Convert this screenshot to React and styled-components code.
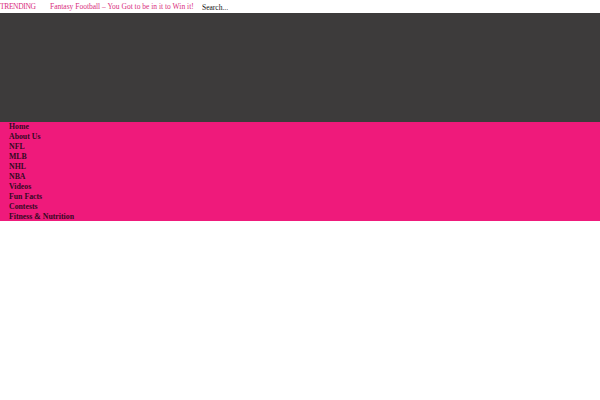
import React from 'react'
import styled, { createGlobalStyle } from 'styled-components'

const GlobalStyle = createGlobalStyle`
  body {
    margin: 0;
    font-family: "Liberation Serif", serif;
    background: #fff;
  }
`

const TopBar = styled.div`
  display: flex;
  align-items: center;
  height: 13px;
  font-size: 7.5px;
  color: #d92d7c;
  white-space: nowrap;
`

const Trending = styled.span`
  width: 50px;
  letter-spacing: -0.35px;
  text-transform: uppercase;
`

const Headline = styled.a`
  color: #d92d7c;
  text-decoration: none;
  width: 150px;
`

const Search = styled.input`
  border: none;
  outline: none;
  padding: 0 0 0 2px;
  margin-top: 1px;
  font-family: "Liberation Serif", serif;
  font-size: 7.5px;
  color: #000;
  background: transparent;
  &::placeholder {
    color: #111;
  }
`

const Banner = styled.div`
  height: 109px;
  background: #3d3b3b;
`

const Menu = styled.ul`
  list-style: none;
  margin: 0;
  padding: 0 0 0 9px;
  background: #ef1a7b;
  height: 99px;
  display: flex;
  flex-direction: column;
  justify-content: center;
`

const MenuItem = styled.li`
  height: 10px;
  line-height: 10px;
  font-size: 7.8px;
  font-weight: bold;
`

const MenuLink = styled.a`
  color: #34091f;
  text-decoration: none;
`

const items = ['Home', 'About Us', 'NFL', 'MLB', 'NHL', 'NBA', 'Videos', 'Fun Facts', 'Contests', 'Fitness & Nutrition']

function App() {
  return (
    <>
      <GlobalStyle />
      <TopBar>
        <Trending>Trending</Trending>
        <Headline>Fantasy Football – You Got to be in it to Win it!</Headline>
        <Search placeholder="Search..." />
      </TopBar>
      <Banner />
      <Menu>
        {items.map(i => (
          <MenuItem key={i}><MenuLink>{i}</MenuLink></MenuItem>
        ))}
      </Menu>
    </>
  )
}

export default App
